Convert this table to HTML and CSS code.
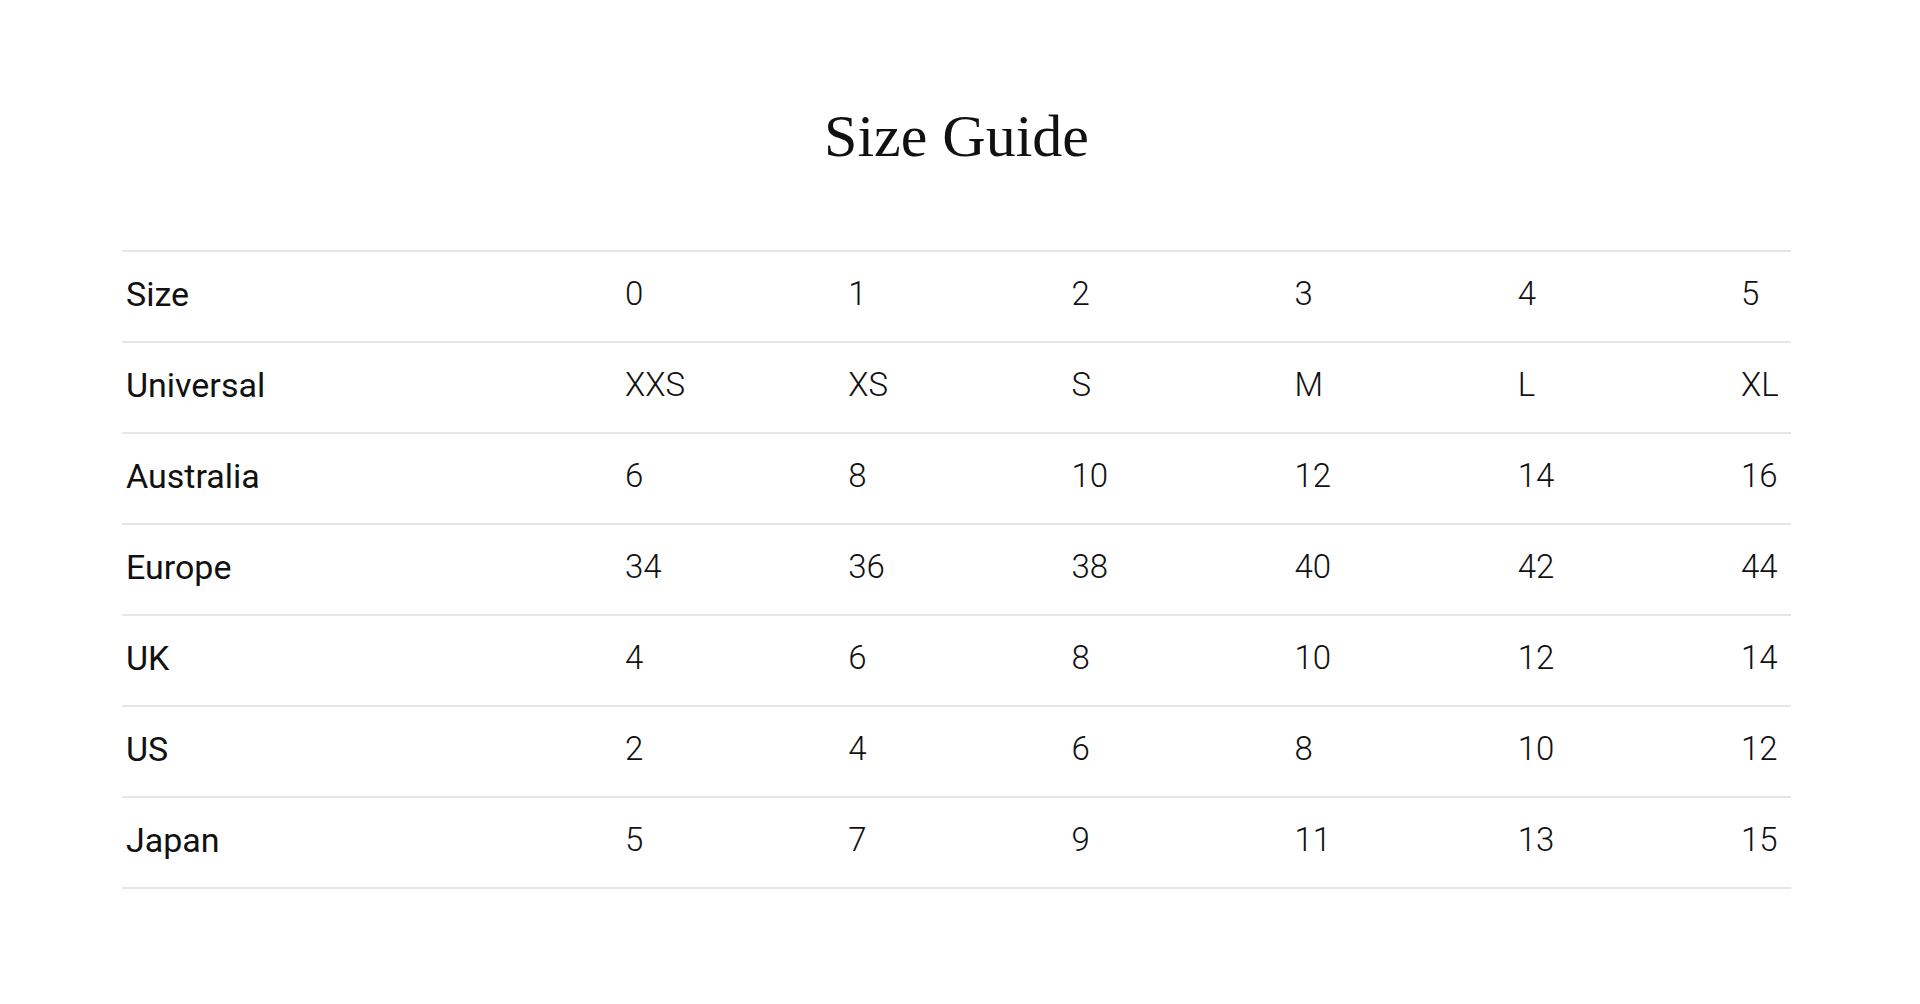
FILE: index.html
```html
<!DOCTYPE html>
<html lang="en">
<head>
<meta charset="utf-8">
<title>Size Guide</title>
<link rel="stylesheet" href="styles.css">
</head>
<body>
<main class="page">
  <section class="guide">
    <h1 class="title">Size Guide</h1>
    <div class="table">
      <div class="row"><div class="label">Size</div><div class="val">0</div><div class="val">1</div><div class="val">2</div><div class="val">3</div><div class="val">4</div><div class="val">5</div></div>
      <div class="row"><div class="label">Universal</div><div class="val">XXS</div><div class="val">XS</div><div class="val">S</div><div class="val">M</div><div class="val">L</div><div class="val">XL</div></div>
      <div class="row"><div class="label">Australia</div><div class="val">6</div><div class="val">8</div><div class="val">10</div><div class="val">12</div><div class="val">14</div><div class="val">16</div></div>
      <div class="row"><div class="label">Europe</div><div class="val">34</div><div class="val">36</div><div class="val">38</div><div class="val">40</div><div class="val">42</div><div class="val">44</div></div>
      <div class="row"><div class="label">UK</div><div class="val">4</div><div class="val">6</div><div class="val">8</div><div class="val">10</div><div class="val">12</div><div class="val">14</div></div>
      <div class="row"><div class="label">US</div><div class="val">2</div><div class="val">4</div><div class="val">6</div><div class="val">8</div><div class="val">10</div><div class="val">12</div></div>
      <div class="row last"><div class="label">Japan</div><div class="val">5</div><div class="val">7</div><div class="val">9</div><div class="val">11</div><div class="val">13</div><div class="val">15</div></div>
    </div>
  </section>
</main>
</body>
</html>
```

FILE: styles.css
```css
html, body {
  margin: 0;
  padding: 0;
  background: #ffffff;
}

body {
  font-family: Roboto, "Liberation Sans", Arial, sans-serif;
  color: #111111;
}

.page {
  padding: 100px 0 0 122px;
}

.guide {
  width: 1669px;
}

.title {
  margin: 0 0 78px 0;
  font-family: "Liberation Serif", "Times New Roman", serif;
  font-weight: 400;
  font-size: 60px;
  line-height: 72px;
  text-align: center;
  color: #111111;
}

.table {
  display: flex;
  flex-direction: column;
}

.row {
  box-sizing: border-box;
  display: grid;
  grid-template-columns: 500px repeat(5, 223.2px) 1fr;
  align-items: center;
  height: 91px;
  padding-bottom: 5px;
  border-top: 2px solid #e6e6e6;
}

.row.last {
  height: 93px;
  border-bottom: 2px solid #e6e6e6;
}

.label,
.val {
  line-height: 40px;
  white-space: nowrap;
}

.label {
  padding: 0 4px;
  font-size: 34px;
  font-weight: 400;
}

.val {
  padding: 0 3px;
  font-size: 33px;
  font-weight: 300;
}
```
